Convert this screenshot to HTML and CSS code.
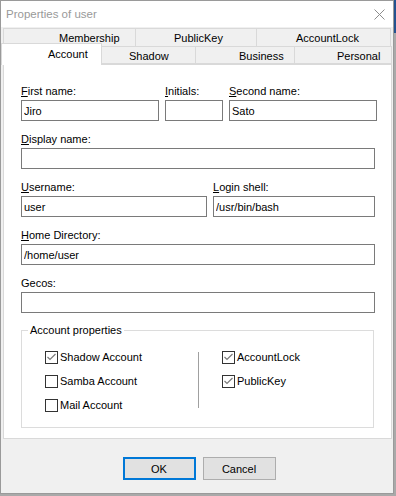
FILE: index.html
```html
<!DOCTYPE html>
<html lang="en">
<head>
  <meta charset="UTF-8">
  <title>Properties of user</title>
  <link rel="stylesheet" href="styles.css">
</head>
<body>
  <div class="window">
    <div class="titlebar">
      <span class="title">Properties of user</span>
      <svg class="close" width="11" height="11" viewBox="0 0 11 11">
        <path d="M0.5 0.5 L10.5 10.5 M10.5 0.5 L0.5 10.5" stroke="#8c8c8c" stroke-width="1" fill="none"/>
      </svg>
    </div>

    <div class="tabs">
      <div class="tab-row back">
        <div class="tab t-membership">Membership</div>
        <div class="tab t-publickey">PublicKey</div>
        <div class="tab t-accountlock">AccountLock</div>
      </div>
      <div class="tab-row front">
        <div class="tab active t-account">Account</div>
        <div class="tab t-shadow">Shadow</div>
        <div class="tab t-business">Business</div>
        <div class="tab t-personal">Personal</div>
      </div>
    </div>

    <div class="panel">
      <div class="row cols-names">
        <label class="field">
          <span class="label"><u>F</u>irst name:</span>
          <input type="text" value="Jiro">
        </label>
        <label class="field">
          <span class="label"><u>I</u>nitials:</span>
          <input type="text" value="">
        </label>
        <label class="field">
          <span class="label"><u>S</u>econd name:</span>
          <input type="text" value="Sato">
        </label>
      </div>

      <label class="field">
        <span class="label"><u>D</u>isplay name:</span>
        <input type="text" value="">
      </label>

      <div class="row cols-user">
        <label class="field">
          <span class="label"><u>U</u>sername:</span>
          <input type="text" value="user">
        </label>
        <label class="field">
          <span class="label"><u>L</u>ogin shell:</span>
          <input type="text" value="/usr/bin/bash">
        </label>
      </div>

      <label class="field">
        <span class="label"><u>H</u>ome Directory:</span>
        <input type="text" value="/home/user">
      </label>

      <label class="field">
        <span class="label">Gecos:</span>
        <input type="text" value="">
      </label>

      <fieldset class="group">
        <legend>Account properties</legend>
        <div class="checks">
          <div class="check-col">
            <div class="check"><span class="box checked"><svg width="11" height="11" viewBox="0 0 11 11"><path d="M1.5 5 L4 7.5 L9.5 2" stroke="#7a7a7a" stroke-width="1.2" fill="none"/></svg></span>Shadow Account</div>
            <div class="check"><span class="box"></span>Samba Account</div>
            <div class="check"><span class="box"></span>Mail Account</div>
          </div>
          <div class="divider"></div>
          <div class="check-col right">
            <div class="check"><span class="box checked"><svg width="11" height="11" viewBox="0 0 11 11"><path d="M1.5 5 L4 7.5 L9.5 2" stroke="#7a7a7a" stroke-width="1.2" fill="none"/></svg></span>AccountLock</div>
            <div class="check"><span class="box checked"><svg width="11" height="11" viewBox="0 0 11 11"><path d="M1.5 5 L4 7.5 L9.5 2" stroke="#7a7a7a" stroke-width="1.2" fill="none"/></svg></span>PublicKey</div>
          </div>
        </div>
      </fieldset>
    </div>

    <div class="buttons">
      <button class="btn default">OK</button>
      <button class="btn">Cancel</button>
    </div>
  </div>
</body>
</html>
```

FILE: styles.css
```css
* {
  margin: 0;
  padding: 0;
  box-sizing: border-box;
}

body {
  background: linear-gradient(#24528f 0 33px, #a9a9a9 33px);
  font-family: "Liberation Sans", Arial, sans-serif;
  font-size: 11px;
  color: #000;
  width: 396px;
  height: 496px;
  overflow: hidden;
}

.window {
  width: 394px;
  height: 494px;
  background-color: #f0f0f0;
  border: 1px solid #9a9a9a;
  display: flex;
  flex-direction: column;
}

/* Title bar */
.titlebar {
  height: 26px;
  background-color: #fff;
  display: flex;
  align-items: center;
  justify-content: space-between;
  padding: 0 8px 0 5px;
}

.title {
  font-size: 11.5px;
  color: #999;
}

.close {
  display: block;
}

/* Tabs */
.tabs {
  padding: 1px 0 0 2px;
}

.tab-row {
  display: flex;
  height: 18px;
}

.tab {
  height: 18px;
  line-height: 17px;
  border: 1px solid #d9d9d9;
  background-color: #f0f0f0;
  margin-left: -1px;
  white-space: nowrap;
}

.back .tab {
  border-bottom: none;
  line-height: 19px;
}

.back .tab:first-child {
  margin-left: 0;
}

.front .tab {
  line-height: 19px;
}

.tab.active {
  position: relative;
  z-index: 1;
  height: 22px;
  margin-top: -3px;
  margin-left: -2px;
  background-color: #fff;
  border-bottom: none;
  line-height: 20px;
}

.t-membership { width: 133px; padding-left: 55px; }
.t-publickey { width: 122px; padding-left: 38px; }
.t-accountlock { width: 135px; padding-left: 39px; }
.t-account { width: 101px; padding-left: 46px; }
.t-shadow { width: 95px; padding-left: 27px; }
.t-business { width: 100px; padding-left: 43px; }
.t-personal { width: 98px; padding-left: 42px; }

/* Page */
.panel {
  margin-left: 2px;
  width: 389px;
  height: 375px;
  background-color: #fff;
  border: 1px solid #d9d9d9;
  padding: 19px 16px 0 17px;
  display: flex;
  flex-direction: column;
  gap: 11px;
}

.row {
  display: grid;
  column-gap: 6px;
}

.cols-names {
  grid-template-columns: 138px 58px 1fr;
}

.cols-user {
  grid-template-columns: 186px 1fr;
}

.field {
  display: flex;
  flex-direction: column;
}

.label {
  line-height: 15px;
  margin-bottom: 1px;
}

.field input {
  height: 21px;
  border: 1px solid #7a7a7a;
  padding: 0 2px;
  font-family: inherit;
  font-size: 11px;
  color: #000;
  background-color: #fff;
  outline: none;
}

/* Group box */
.group {
  margin-top: -1px;
  margin-right: 1px;
  border: 1px solid #dcdcdc;
}

.group legend {
  margin-left: 6px;
  padding: 0 2px;
  line-height: 15px;
}

.checks {
  display: grid;
  grid-template-columns: 153px 1px 1fr;
  padding: 7px 0 10px 23px;
}

.check-col.right {
  padding-left: 23px;
}

.check {
  height: 24px;
  display: flex;
  align-items: center;
  gap: 2px;
}

.box {
  width: 13px;
  height: 13px;
  border: 1px solid #333;
  background-color: #fff;
  display: flex;
  align-items: center;
  justify-content: center;
}

.divider {
  background-color: #a0a0a0;
  margin: 7px 0 9px;
}

/* Buttons */
.buttons {
  display: flex;
  justify-content: center;
  gap: 7px;
  padding: 18px 0 0 4px;
}

.btn {
  width: 73px;
  height: 23px;
  background-color: #e1e1e1;
  border: 1px solid #adadad;
  font-family: inherit;
  font-size: 11px;
  color: #000;
}

.btn.default {
  border: 2px solid #0078d7;
}
```
